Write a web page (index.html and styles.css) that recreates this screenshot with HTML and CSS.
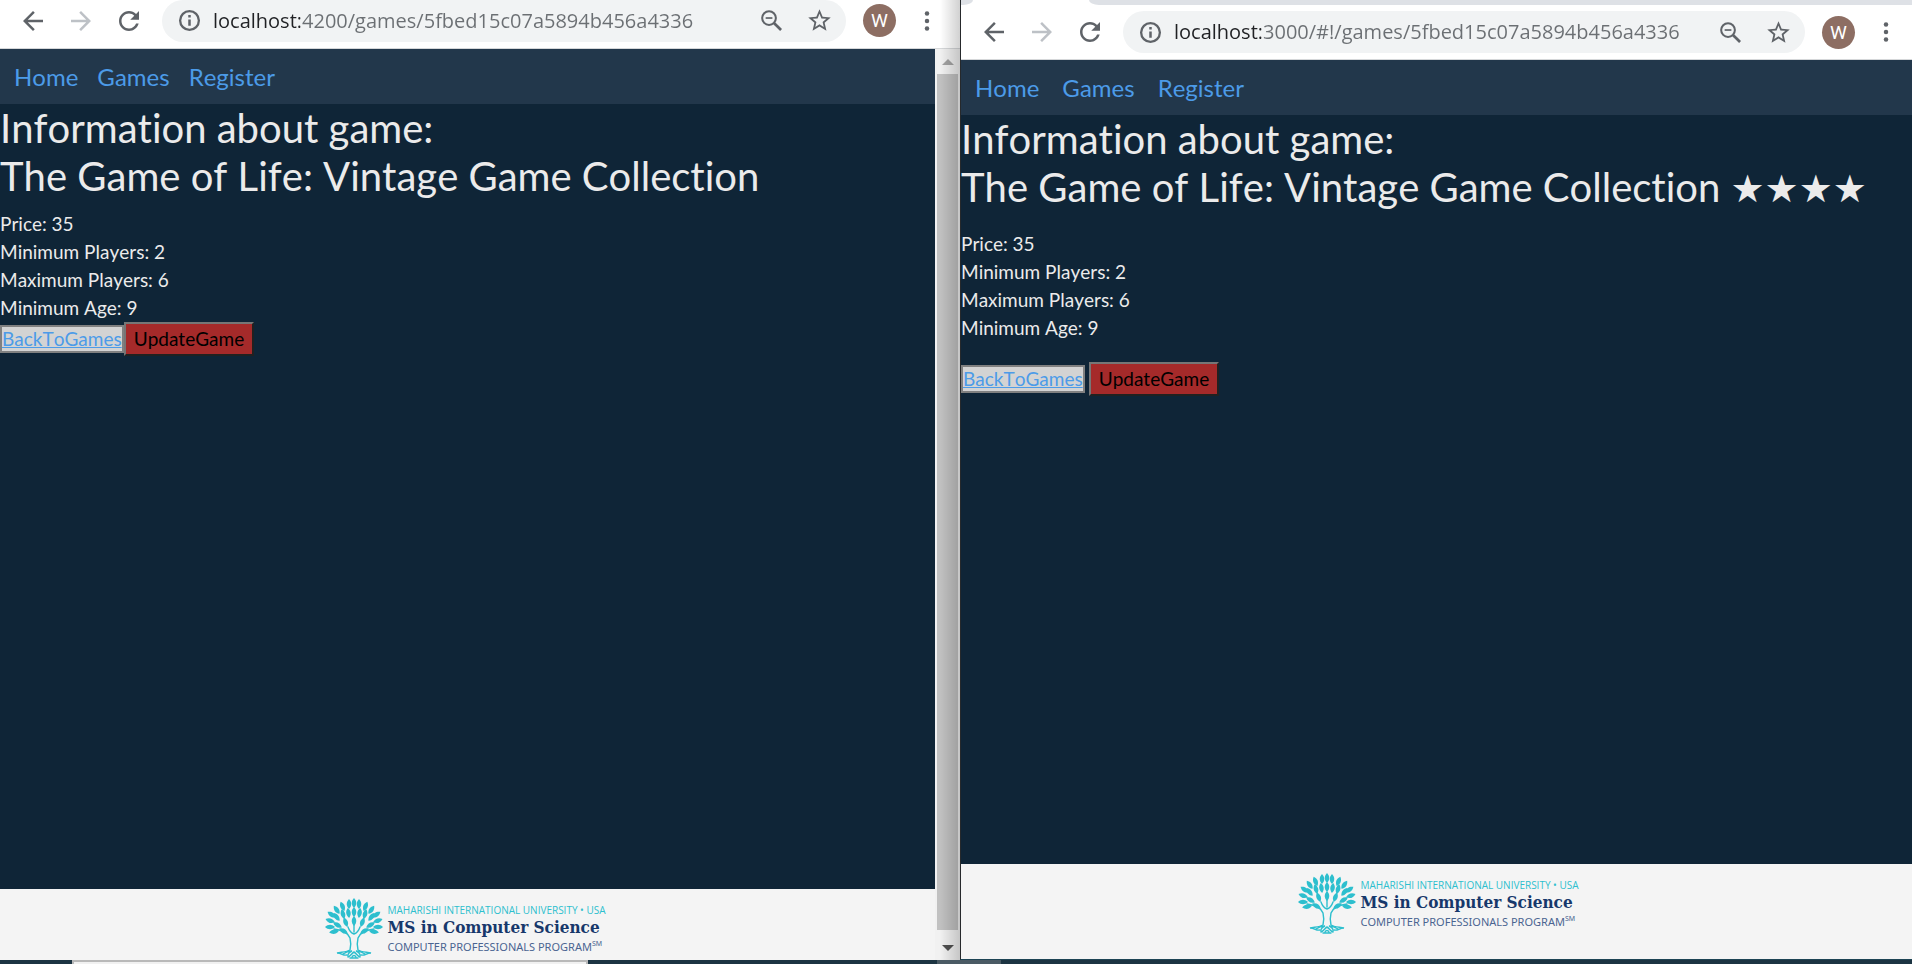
FILE: index.html
```html
<!DOCTYPE html>
<html lang="en">
<head>
<meta charset="utf-8">
<title>Games</title>
<link rel="stylesheet" href="styles.css">
</head>
<body>
<svg class="defs" aria-hidden="true">
  <symbol id="back" viewBox="0 0 24 24"><path d="M20 11H7.83l5.59-5.59L12 4l-8 8 8 8 1.41-1.41L7.83 13H20v-2z"/></symbol>
  <symbol id="forward" viewBox="0 0 24 24"><path d="M4 11h12.17l-5.59-5.59L12 4l8 8-8 8-1.41-1.41L16.17 13H4v-2z"/></symbol>
  <symbol id="reload" viewBox="0 0 24 24"><path d="M17.65 6.35C16.2 4.9 14.21 4 12 4c-4.42 0-7.99 3.58-7.99 8s3.57 8 7.99 8c3.73 0 6.84-2.55 7.73-6h-2.08c-.82 2.33-3.04 4-5.65 4-3.31 0-6-2.69-6-6s2.69-6 6-6c1.66 0 3.14.69 4.22 1.78L13 11h7V4l-2.35 2.35z"/></symbol>
  <symbol id="info" viewBox="0 0 24 24"><circle cx="12" cy="12" r="9" fill="none" stroke="#5f6368" stroke-width="2.200"/><path d="M10.800 17h2.400v-6h-2.400zM10.800 9.200h2.400V6.800h-2.400z"/></symbol>
  <symbol id="zoom" viewBox="0 0 24 24"><g fill="none" stroke="#5f6368"><circle cx="9.800" cy="9.800" r="6.100" stroke-width="1.800"/><path d="M14.200 14.200l6.300 6.300" stroke-width="2.400"/><path d="M6.800 9.800h6" stroke-width="1.500"/></g></symbol>
  <symbol id="star" viewBox="0 0 24 24"><path d="M22 9.240l-7.190-.62L12 2 9.190 8.630 2 9.240l5.460 4.730L5.820 21 12 17.270 18.180 21l-1.630-7.030L22 9.240zM12 15.400l-3.760 2.270 1-4.280-3.320-2.880 4.380-.38L12 6.100l1.710 4.040 4.380.38-3.320 2.880 1 4.280L12 15.400z"/></symbol>
  <symbol id="dots" viewBox="0 0 24 24"><circle cx="12" cy="6" r="1.800"/><circle cx="12" cy="12" r="1.800"/><circle cx="12" cy="18" r="1.800"/></symbol>
  <symbol id="tree" viewBox="0 0 58 62">
    <g fill="#2dbfce">
      <path id="lf" d="M0 1C-3.200-2.500-2.800-6 0-9 2.800-6 3.200-2.500 0 1z" transform="translate(29 9)"/>
      <use href="#lf" transform="translate(-5 1)"/><use href="#lf" transform="translate(5 1)"/>
      <use href="#lf" transform="translate(0 9)"/>
      <use href="#lf" transform="translate(-5 10) rotate(-8 29 9)"/><use href="#lf" transform="translate(5 10) rotate(8 29 9)"/>
      <use href="#lf" transform="translate(-10 3) rotate(-22 29 9)"/><use href="#lf" transform="translate(10 3) rotate(22 29 9)"/>
      <use href="#lf" transform="translate(-10 11) rotate(-15 29 9)"/><use href="#lf" transform="translate(10 11) rotate(15 29 9)"/>
      <use href="#lf" transform="translate(-15 6) rotate(-35 29 9)"/><use href="#lf" transform="translate(15 6) rotate(35 29 9)"/>
      <use href="#lf" transform="translate(-15 13) rotate(-38 29 9)"/><use href="#lf" transform="translate(15 13) rotate(38 29 9)"/>
      <use href="#lf" transform="translate(-19 10) rotate(-55 29 9)"/><use href="#lf" transform="translate(19 10) rotate(55 29 9)"/>
      <use href="#lf" transform="translate(-20 15) rotate(-70 29 9)"/><use href="#lf" transform="translate(20 15) rotate(70 29 9)"/>
      <use href="#lf" transform="translate(-20 20) rotate(-90 29 9)"/><use href="#lf" transform="translate(20 20) rotate(90 29 9)"/>
      <use href="#lf" transform="translate(-13 20) rotate(-60 29 9)"/><use href="#lf" transform="translate(13 20) rotate(60 29 9)"/>
      <use href="#lf" transform="translate(-7 19) rotate(-20 29 9)"/><use href="#lf" transform="translate(7 19) rotate(20 29 9)"/>
      <use href="#lf" transform="translate(0 18)"/>
      <use href="#lf" transform="translate(-16 24) rotate(-100 29 9)"/><use href="#lf" transform="translate(16 24) rotate(100 29 9)"/>
      <use href="#lf" transform="translate(-7 26) rotate(-60 29 9)"/><use href="#lf" transform="translate(7 26) rotate(60 29 9)"/>
    </g>
    <g fill="none" stroke="#2dbfce" stroke-width="1.400" stroke-linecap="round">
      <path d="M9 31c7 1 14 3 16 9 1 4 1 8 0 12-3 2-9 2-13 3 5 0 6 3 10 2M49 31c-7 1-14 3-16 9-1 4-1 8 0 12 3 2 9 2 13 3-5 0-6 3-10 2M23 29c1 3 3 6 6 7 3-1 5-4 6-7M29 20v14"/>
      <path d="M18 56c4-3 7-3 9-3-3 1-5 4-4 6 3-1 4-4 6-5 2 1 3 4 6 5 1-2-1-5-4-6 2 0 5 0 9 3M27 59c1-2 3-2 4 0M25 60h8"/>
    </g>
  </symbol>
</svg>
<div class="desktop">
  <section class="window left">
    <header class="toolbar">
      <button class="tool" aria-label="Back"><svg><use href="#back"/></svg></button>
      <button class="tool faded" aria-label="Forward" disabled><svg><use href="#forward"/></svg></button>
      <button class="tool" aria-label="Reload"><svg><use href="#reload"/></svg></button>
      <div class="omnibox">
        <svg class="info"><use href="#info"/></svg>
        <input class="url" type="text" aria-label="Address" value="localhost:4200/games/5fbed15c07a5894b456a4336">
        <button class="tool small" aria-label="Zoom"><svg><use href="#zoom"/></svg></button>
        <button class="tool small" aria-label="Bookmark"><svg><use href="#star"/></svg></button>
      </div>
      <button class="avatar" aria-label="Profile">W</button>
      <button class="tool menu" aria-label="Menu"><svg><use href="#dots"/></svg></button>
    </header>
    <div class="view">
      <div class="page">
        <nav class="nav"><a href="#">Home</a><a href="#">Games</a><a href="#">Register</a></nav>
        <main class="main">
          <h1>Information about game:<br>The Game of Life: Vintage Game Collection</h1>
          <div class="facts"><div>Price: 35</div><div>Minimum Players: 2</div><div>Maximum Players: 6</div><div>Minimum Age: 9</div></div>
          <div class="actions"><a class="backlink" href="#">BackToGames</a><button class="update">UpdateGame</button></div>
        </main>
        <footer class="footer">
          <svg class="tree"><use href="#tree"/></svg>
          <div class="brand"><span class="uni">MAHARISHI INTERNATIONAL UNIVERSITY • USA</span><span class="ms">MS in Computer Science</span><span class="prog">COMPUTER PROFESSIONALS PROGRAM<sup>SM</sup></span></div>
        </footer>
      </div>
      <div class="scrollbar"><i class="up"></i><i class="thumb"></i><i class="down"></i></div>
    </div>
  </section>
  <section class="window right">
    <div class="tabs"><i class="tab-before"></i><i class="tab-after"></i></div>
    <header class="toolbar">
      <button class="tool" aria-label="Back"><svg><use href="#back"/></svg></button>
      <button class="tool faded" aria-label="Forward" disabled><svg><use href="#forward"/></svg></button>
      <button class="tool" aria-label="Reload"><svg><use href="#reload"/></svg></button>
      <div class="omnibox">
        <svg class="info"><use href="#info"/></svg>
        <input class="url" type="text" aria-label="Address" value="localhost:3000/#!/games/5fbed15c07a5894b456a4336">
        <button class="tool small" aria-label="Zoom"><svg><use href="#zoom"/></svg></button>
        <button class="tool small" aria-label="Bookmark"><svg><use href="#star"/></svg></button>
      </div>
      <button class="avatar" aria-label="Profile">W</button>
      <button class="tool menu" aria-label="Menu"><svg><use href="#dots"/></svg></button>
    </header>
    <div class="view">
      <div class="page">
        <nav class="nav"><a href="#">Home</a><a href="#">Games</a><a href="#">Register</a></nav>
        <main class="main">
          <h1>Information about game:<br>The Game of Life: Vintage Game Collection <span class="stars">★★★★</span></h1>
          <div class="facts"><div>Price: 35</div><div>Minimum Players: 2</div><div>Maximum Players: 6</div><div>Minimum Age: 9</div></div>
          <div class="actions"><a class="backlink" href="#">BackToGames</a><button class="update">UpdateGame</button></div>
        </main>
        <footer class="footer">
          <svg class="tree"><use href="#tree"/></svg>
          <div class="brand"><span class="uni">MAHARISHI INTERNATIONAL UNIVERSITY • USA</span><span class="ms">MS in Computer Science</span><span class="prog">COMPUTER PROFESSIONALS PROGRAM<sup>SM</sup></span></div>
        </footer>
      </div>
    </div>
  </section>
</div>
<div class="taskbar"><i class="task"></i><i class="mark"></i></div>
</body>
</html>
```
FILE: styles.css
```css
* { box-sizing: border-box; }
body { margin: 0; height: 100vh; display: flex; flex-direction: column; overflow: hidden; background: #1c3442; font: 19px/28px Lato, sans-serif; font-variant-ligatures: none; font-kerning: none; color: #ebebeb; }
button { font: inherit; font-kerning: none; padding: 0; border: 0; background: none; }
.defs { position: absolute; width: 0; height: 0; }
.desktop { flex: 1; min-height: 0; display: grid; grid-template-columns: 960fr 952fr; }
.window { display: flex; flex-direction: column; min-width: 0; }
.window.left { position: relative; }
.window.left::after { content: ""; position: absolute; top: 0; right: 0; bottom: 0; width: 20px; background: linear-gradient(90deg, transparent, rgba(0,0,0,.18)); }
.window.right { border-left: 1px solid #26292c; border-bottom: 1px solid #1d4454; }

.tabs { display: flex; justify-content: space-between; gap: 116px; height: 5px; background: #fff; }
.tab-before { width: 12px; background: #dee1e6; border-bottom-right-radius: 10px 5px; }
.tab-after { flex: 1; background: #dee1e6; border-bottom-left-radius: 10px 5px; }
.toolbar { display: flex; align-items: center; height: 49px; padding: 0 13px 7px 9px; background: #fff; border-bottom: 1px solid #d5d7d9; }
.right .toolbar { height: 55px; padding-right: 6px; padding-bottom: 0; }
.tool { flex: none; width: 48px; height: 32px; display: grid; place-items: center; fill: #5f6368; }
.tool svg { width: 30px; height: 30px; }
.tool.faded { fill: #bdc1c6; }
.tool.small svg { width: 27px; height: 27px; }
.tool.menu { width: 40px; }
.omnibox { flex: 1; min-width: 0; display: flex; align-items: center; height: 42px; margin: 0 17px 0 9px; padding: 0 3px 0 15px; border-radius: 21px; background: #f1f3f4; }
.info { flex: none; width: 25px; height: 25px; fill: #5f6368; }
.url { flex: 1; min-width: 0; margin-left: 11px; padding: 0; border: 0; font: 20px/28px "Open Sans", sans-serif; color: transparent; background: linear-gradient(90deg, #202124 87px, #6b6f73 87px); -webkit-background-clip: text; background-clip: text; }
.avatar { flex: none; width: 33px; height: 33px; border-radius: 50%; background: #8d6e63; color: #fff; font: 19px/33px Roboto, sans-serif; margin-right: 11px; }

.view { flex: 1; min-height: 0; display: flex; }
.page { flex: 1; min-width: 0; display: flex; flex-direction: column; background: #0f2537; }
.nav { display: flex; gap: 19px; height: 55px; padding: 0 14px; align-items: center; background: #22374b; font-size: 24px; }
.right .nav { gap: 23px; }
.nav a { color: #4c9be8; text-decoration: none; }
.main { flex: 1; }
h1 { margin: 0 0 10px; font-size: 40px; line-height: 48px; font-weight: 400; white-space: nowrap; }
.right h1 { margin-bottom: 19px; }
.stars { font-family: "DejaVu Sans", sans-serif; font-size: 38px; line-height: 40px; }
.actions { display: flex; align-items: center; }
.right .actions { gap: 4px; margin-top: 20px; }
.backlink { color: #4c9be8; background: #d3d3d3; border: 2px solid #808080; line-height: 24px; }
.update { height: 34px; padding: 0 8px; background: #a52a2a; border: 2px outset #767676; color: #000; }

.footer { display: flex; justify-content: center; align-items: flex-start; gap: 4px; height: 71px; padding: 9px 4px 0 0; background: #f4f4f4; }
.right .footer { height: 95px; padding: 9px 0 0 4px; }
.tree { width: 58px; height: 62px; }
.brand { display: flex; flex-direction: column; white-space: nowrap; font-family: "Open Sans", sans-serif; font-kerning: normal; padding-top: 5px; }
.uni { font-size: 10px; line-height: 14px; color: #2dbfce; font-weight: 500; }
.ms { font: bold 17px/21px "DejaVu Serif Condensed", "DejaVu Serif", serif; color: #17386b; }
.prog { font: 11px/18px "Noto Sans", sans-serif; font-kerning: none; color: #4a6491; }
.prog sup { font-size: 7px; line-height: 7px; }

.scrollbar { width: 25px; padding: 0 2px; background: #f1f1f1; display: flex; flex-direction: column; align-items: center; }
.up, .down { width: 0; height: 0; border: 6px solid transparent; }
.up { border-top: 0; border-bottom-color: #a3a3a3; margin: 10px 0 9px; }
.thumb { flex: 1; width: 21px; background: #c1c1c1; }
.down { border-bottom: 0; border-top-color: #505050; margin: 15px 0 9px; }

.taskbar { display: flex; height: 4px; background: #1c3442; }
.task { width: 516px; margin-left: 72px; background: #f1f1f1; border: 2px solid #b9b9b9; border-bottom: 0; }
.mark { width: 64px; margin-left: 349px; background: #4a5a64; }
```
